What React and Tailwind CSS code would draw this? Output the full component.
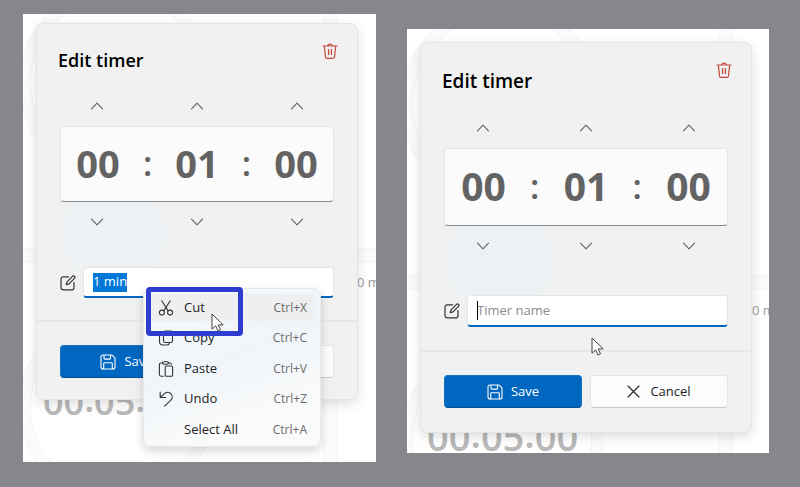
import React from "react";

const SMALL = {
  panel: "pt-[9px] pb-[62px] pl-[13px] pr-[18px]",
  title: "pt-[22px] text-[18px]",
  steppers: "pt-[22px]",
  digits: "h-[76px] text-[38px]",
  field: "mt-[35px] mb-[22px]",
  input: "h-[31px]",
  footer: "pb-[21px]",
  shade: "left-[20px] bottom-[37px] text-[36px]",
  peek: "top-[258px] left-[334px]",
  art: { cx: 94, top: 69, bottom: 392, r: 92, v: 301, h: 235 },
};

const LARGE = {
  panel: "pt-[13px] pb-5 pl-[13px] pr-[17px]",
  title: "pt-6 text-[19px]",
  steppers: "pt-[23px]",
  digits: "h-[78px] text-[39px]",
  field: "mt-[39px] mb-[23px]",
  input: "h-8",
  footer: "pb-6",
  shade: "left-[20px] bottom-[-6px] text-[38px]",
  peek: "top-[271px] left-[345px]",
  art: { cx: 95, top: 75, bottom: 410, r: 95, v: 312, h: 247 },
};

function Svg({ size, box = 24, width = 1.5, className = "", children }) {
  return (
    <svg
      width={size}
      height={size}
      viewBox={`0 0 ${box} ${box}`}
      fill="none"
      stroke="currentColor"
      strokeWidth={width}
      strokeLinecap="round"
      strokeLinejoin="round"
      aria-hidden="true"
      className={`shrink-0 ${className}`}
    >
      {children}
    </svg>
  );
}

const ChevronIcon = ({ down }) => (
  <Svg size={14} box={14} width={1.2}>
    <path d={down ? "M1.5 4.2 7 9.8l5.5-5.6" : "M1.5 9.8 7 4.2l5.5 5.6"} />
  </Svg>
);

const TrashIcon = () => (
  <Svg size={16} box={16} width={1.2}>
    <path d="M1 3h14M5.8 3c0-1.2.9-1.9 2.2-1.9s2.2.7 2.2 1.9M2.3 3l1.2 11c.1.8.6 1.3 1.4 1.3h6.2c.8 0 1.3-.5 1.4-1.3L13.7 3" />
    <path d="M6.6 6.6v5M9.4 6.6v5" strokeWidth="1.3" />
  </Svg>
);

const EditIcon = () => (
  <Svg size={16} box={16} width={1.2}>
    <path d="M8.5 1.8H3.2C1.9 1.8 1 2.7 1 4v8.6c0 1.3.9 2.2 2.2 2.2h8.6c1.3 0 2.2-.9 2.2-2.2V7.5" />
    <path d="M12.5 1.3c.6-.6 1.5-.6 2 0 .6.5.6 1.4 0 2L9 8.9l-2.8.8.8-2.8z" />
  </Svg>
);

const SaveIcon = () => (
  <Svg size={16} box={16} width={1.1}>
    <path d="M1 3c0-1.2.8-2 2-2h8.3c.5 0 1 .2 1.4.6l1.7 1.7c.4.4.6.9.6 1.4V13c0 1.2-.8 2-2 2H3c-1.2 0-2-.8-2-2z" />
    <path d="M4 1.2v3.1c0 .5.3.8.8.8h4.9c.5 0 .8-.3.8-.8V1.2M3.7 14.8V9.6c0-.5.3-.8.8-.8h7c.5 0 .8.3.8.8v5.2" />
  </Svg>
);

const CloseIcon = () => (
  <Svg size={13} box={13} width={1.1}>
    <path d="m1 1 11 11M12 1 1 12" />
  </Svg>
);

const CutIcon = () => (
  <Svg size={16} box={16} width={1.1}>
    <path d="M3.8.8 10 10.6M12.2.8 6 10.6" />
    <circle cx="3.9" cy="12.6" r="2.5" />
    <circle cx="12.1" cy="12.6" r="2.5" />
  </Svg>
);

const CopyIcon = () => (
  <Svg size={16} box={16} width={1.1}>
    <rect x="5.5" y="1" width="9" height="11.5" rx="1.8" />
    <path d="M5.5 3C2.8 3 1.5 3.4 1.5 5.5v6c0 2.2 1.3 3.5 3.500 3.500h4c1.200 0 2-.7 2.300-1.500" />
  </Svg>
);

const PasteIcon = () => (
  <Svg size={16} box={16} width={1.1}>
    <path d="M4.600 2H3C2 2 1.400 2.600 1.400 3.600v10c0 1 .6 1.600 1.600 1.600h2.500M10.400 2h1.400c1 0 1.600.5 1.600 1.300" />
    <rect x="4.600" y=".8" width="5.800" height="2.400" rx="1.200" />
    <rect x="7.200" y="5" width="7.400" height="10.200" rx="1.300" />
  </Svg>
);

const UndoIcon = () => (
  <Svg size={16} box={16} width={1.1}>
    <path d="M2.200 1.200v5.300h5.300M2.500 6.200l3.600-3.400c2-1.900 4.900-1.900 6.700-.2 1.900 1.900 1.900 4.700 0 6.600l-6.200 6" />
  </Svg>
);

function Pointer({ className }) {
  return (
    <svg
      width="13"
      height="19"
      viewBox="0 0 13 19"
      aria-hidden="true"
      className={`pointer-events-none absolute ${className}`}
    >
      <path
        d="M1 1v15.200l3.700-3.400 2.300 5.200 2.500-1.100-2.300-5H12.200z"
        fill="#fff"
        stroke="#444"
        strokeWidth="1"
        strokeLinejoin="round"
      />
    </svg>
  );
}

function Backdrop({ size }) {
  const { cx, top, bottom, r, v, h } = size.art;
  return (
    <div className="absolute inset-0" aria-hidden="true">
      <svg className="h-full w-full" fill="none">
        {[top, bottom].map((cy) => (
          <g key={cy}>
            <circle cx={cx} cy={cy} r={r} stroke="#f3f4f4" strokeWidth="12" />
            <circle cx={cx} cy={cy} r={r} stroke="#fafbfb" strokeWidth="10" />
          </g>
        ))}
        <rect x={v} y="-2" width="13" height="600" fill="#fafcfc" stroke="#f2f5f6" />
        <rect x="-2" y={h} width="500" height="13" fill="#f9fbfc" stroke="#f1f4f5" />
      </svg>
      <div
        className={`absolute flex items-end font-semibold leading-[46px] text-[#b9b9b9] ${size.shade}`}
      >
        <span>00</span>
        <span className="pb-[3px]">:</span>
        <span>05</span>
        <span className="pb-[3px]">:</span>
        <span>00</span>
      </div>
      <span className={`absolute whitespace-nowrap text-[13px] leading-5 text-[#9a9a9a] ${size.peek}`}>
        0 m
      </span>
    </div>
  );
}

function Steppers({ down }) {
  return (
    <div className="grid h-5 grid-cols-[3fr_1fr_3fr_1fr_3fr]">
      {[
        ["hours", "col-start-1"],
        ["minutes", "col-start-3"],
        ["seconds", "col-start-5"],
      ].map(([unit, column]) => (
        <button
          key={unit}
          type="button"
          aria-label={`${down ? "Decrease" : "Increase"} ${unit}`}
          className={`flex items-center justify-center text-[#666] ${column}`}
        >
          <ChevronIcon down={down} />
        </button>
      ))}
    </div>
  );
}

function TimerDialog({ size, field }) {
  const colon = <span className="text-[34px] font-semibold leading-10">:</span>;
  return (
    <section className="relative rounded-lg border border-[#e3e4e4] bg-[#f1f1f1] bg-[radial-gradient(circle_at_24%_56%,#ecf1f5_0%,#f1f1f1_30%)] shadow-[0_4px_12px_rgba(0,0,0,0.13)]">
      <div className="px-[23px]">
        <header className="-ml-0.5 flex items-start justify-between">
          <h2 className={`font-semibold leading-7 text-black ${size.title}`}>Edit timer</h2>
          <button type="button" aria-label="Delete timer" className="-mr-2 mt-[19px] flex px-1 text-[#c4473d]">
            <TrashIcon />
          </button>
        </header>
        <div className={size.steppers}>
          <Steppers />
          <div
            className={`my-[10px] grid grid-cols-[3fr_1fr_3fr_1fr_3fr] place-items-center rounded border border-[#e4e5e5] border-b-[#85888a] bg-[#fbfbfb] pb-[3px] font-bold leading-none text-[#636363] ${size.digits}`}
          >
            <span>00</span>
            {colon}
            <span>01</span>
            {colon}
            <span>00</span>
          </div>
          <Steppers down />
        </div>
        <div className={`flex items-center gap-[7px] ${size.field}`}>
          <span className="text-[#333]">
            <EditIcon />
          </span>
          <div
            className={`relative flex min-w-0 flex-1 items-center rounded border border-[#e4e5e5] border-b-2 border-b-[#0067c0] bg-white px-[9px] text-[13px] ${size.input}`}
          >
            {field}
          </div>
        </div>
      </div>
      <footer
        className={`grid grid-cols-2 gap-2 border-t-2 border-[#e6e7e7] px-[23px] pt-[23px] text-[13px] ${size.footer}`}
      >
        <button
          type="button"
          className="flex h-[33px] items-center justify-center gap-2 rounded border border-[#1473c5] border-b-[#00509a] bg-[#0067c0] text-white"
        >
          <SaveIcon />
          Save
        </button>
        <button
          type="button"
          className="flex h-[33px] items-center justify-center gap-2.5 rounded border border-[#e4e5e5] border-b-[#c9caca] bg-[#fcfcfc] text-[#222]"
        >
          <CloseIcon />
          Cancel
        </button>
      </footer>
    </section>
  );
}

const MENU = [
  { label: "Cut", keys: "Ctrl+X", icon: <CutIcon />, active: true },
  { label: "Copy", keys: "Ctrl+C", icon: <CopyIcon /> },
  { label: "Paste", keys: "Ctrl+V", icon: <PasteIcon /> },
  { label: "Undo", keys: "Ctrl+Z", icon: <UndoIcon /> },
  { label: "Select All", keys: "Ctrl+A", icon: null },
];

function ContextMenu() {
  return (
    <div
      role="menu"
      className="absolute left-[120px] top-[274px] flex h-[159px] w-[178px] flex-col justify-between rounded-lg border border-[#e6e8ea] bg-[linear-gradient(160deg,#f6f8fa_0%,#f0f5fa_45%,#f9fafa_75%)] px-1 pb-[3px] pt-[5px] shadow-[0_4px_10px_rgba(0,0,0,0.16)]"
    >
      {MENU.map(({ label, keys, icon, active }) => (
        <button
          key={label}
          type="button"
          role="menuitem"
          className={`flex h-[27px] items-center rounded pl-[10px] pr-[9px] text-left text-[13px] text-[#222] ${
            active ? "bg-[#edeff1]" : ""
          }`}
        >
          <span className="w-[26px] text-[#333]">{icon}</span>
          <span className="flex-1">{label}</span>
          <span className="text-[12px] text-[#6b6b6b]">{keys}</span>
        </button>
      ))}
    </div>
  );
}

export default function App() {
  return (
    <main className="grid min-h-screen grid-cols-[353fr_362fr] items-start gap-[31px] bg-[#86878c] pb-[25px] pl-[23px] pr-[31px] pt-[14px] font-['Open_Sans','Noto_Sans',sans-serif]">
      <div className={`relative overflow-hidden bg-white ${SMALL.panel}`}>
        <Backdrop size={SMALL} />
        <TimerDialog
          size={SMALL}
          field={
            <input
              aria-label="Timer name"
              defaultValue="1 min"
              className="h-[19px] w-[34px] bg-[#0078d7] text-white outline-none"
            />
          }
        />
        <ContextMenu />
        <div className="pointer-events-none absolute left-[123px] top-[273px] h-[49px] w-[97px] rounded-sm border-[5px] border-[#2e3dcf]" />
        <Pointer className="left-[188px] top-[299px]" />
      </div>
      <div className={`relative mt-[15px] overflow-hidden bg-white ${LARGE.panel}`}>
        <Backdrop size={LARGE} />
        <TimerDialog
          size={LARGE}
          field={
            <>
              <span className="absolute left-[9px] h-[19px] w-px bg-black" />
              <input
                aria-label="Timer name"
                placeholder="Timer name"
                className="w-full min-w-0 bg-transparent outline-none placeholder:text-[#8c8c8c]"
              />
            </>
          }
        />
        <Pointer className="left-[184px] top-[308px]" />
      </div>
    </main>
  );
}
